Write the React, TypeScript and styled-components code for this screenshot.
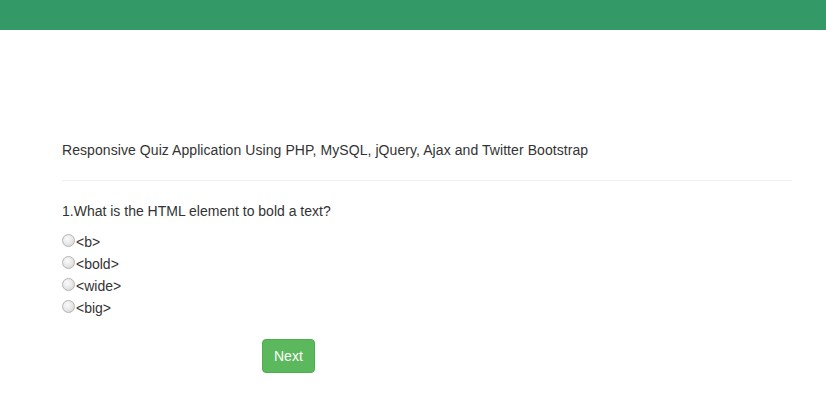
import React from "react";
import styled, { createGlobalStyle } from "styled-components";

const Global = createGlobalStyle`
  html, body { margin: 0; padding: 0; background: #fff; }
  body {
    font-family: "Liberation Sans", Arial, Helvetica, sans-serif;
    font-size: 14px;
    line-height: 20px;
    color: #333;
  }
`;

const TopBar = styled.div`
  height: 30px;
  background: #339966;
`;

const Main = styled.main`
  width: 730px;
  margin-left: 62px;
  padding-top: 110px;
`;

const Title = styled.h4`
  margin: 0;
  font-size: 14px;
  font-weight: normal;
  line-height: 20px;
  letter-spacing: 0.07px;
`;

const Rule = styled.hr`
  margin: 20px 0;
  border: 0;
  border-top: 1px solid #eee;
`;

const Question = styled.p`
  margin: 0 0 10px;
`;

const Options = styled.div`
  display: flex;
  flex-direction: column;
`;

const Option = styled.label`
  display: flex;
  align-items: center;
  height: 22px;
  cursor: pointer;
`;

const Radio = styled.span`
  display: inline-block;
  box-sizing: border-box;
  width: 13px;
  height: 13px;
  border-radius: 50%;
  border: 1px solid #b4b4b4;
  background: radial-gradient(circle at 40% 35%, #fbfbfb 0%, #e6e6e6 55%, #d0d0d0 100%);
  margin-right: 1px;
  margin-top: -3px;
`;

const ButtonRow = styled.div`
  padding-left: 200px;
  margin-top: 20px;
`;

const NextButton = styled.button`
  font-family: inherit;
  font-size: 14px;
  line-height: 20px;
  padding: 6px 11px;
  color: #fff;
  background: #5cb85c;
  border: 1px solid #4cae4c;
  border-radius: 4px;
  cursor: pointer;
`;

const options = ["<b>", "<bold>", "<wide>", "<big>"];

export default function App() {
  return (
    <>
      <Global />
      <TopBar />
      <Main>
        <Title>Responsive Quiz Application Using PHP, MySQL, jQuery, Ajax and Twitter Bootstrap</Title>
        <Rule />
        <Question>1.What is the HTML element to bold a text?</Question>
        <Options>
          {options.map((o) => (
            <Option key={o}>
              <Radio />
              {o}
            </Option>
          ))}
        </Options>
        <ButtonRow>
          <NextButton>Next</NextButton>
        </ButtonRow>
      </Main>
    </>
  );
}
